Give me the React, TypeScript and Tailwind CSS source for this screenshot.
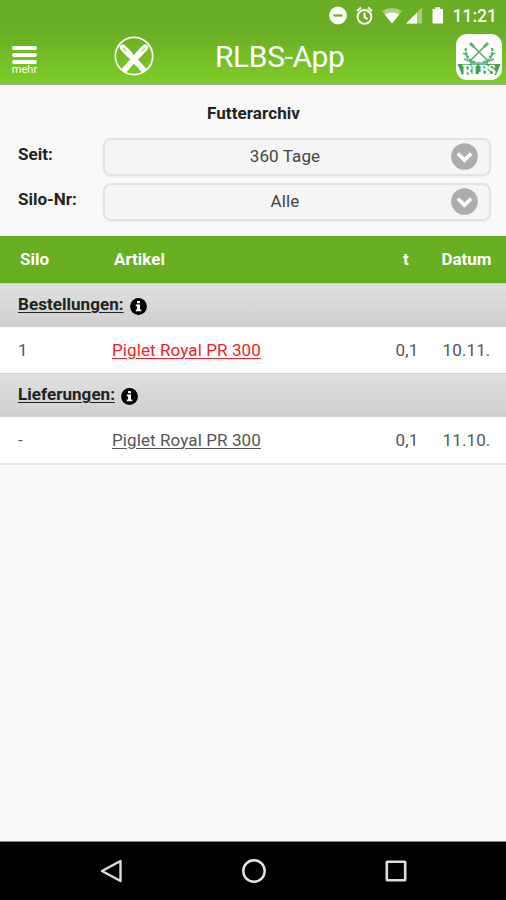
import { type ReactNode } from "react";

interface FeedEntry {
    silo: string;
    article: string;
    amount: string;
    date: string;
    open?: boolean;
}

const orders: FeedEntry[] = [
    { silo: "1", article: "Piglet Royal PR 300", amount: "0,1", date: "10.11.", open: true },
];

const deliveries: FeedEntry[] = [
    { silo: "-", article: "Piglet Royal PR 300", amount: "0,1", date: "11.10." },
];

function StatusBar() {
    return (
        <div className="flex h-8 items-center justify-end pr-[9px] text-white">
            <svg width="114" height="20" viewBox="0 0 114 20" fill="currentColor" className="mr-[10px]">
                <circle cx="9" cy="9.5" r="8.9" />
                <rect x="4.4" y="8.4" width="9.2" height="2.2" fill="#69ae24" />
                <g fill="none" stroke="currentColor" strokeWidth="2">
                    <circle cx="35.5" cy="10.8" r="6.9" />
                    <path d="M35.5 6.5V11L38.5 13.3M28 5L32 1.6M43 5L39 1.6" />
                </g>
                <path d="M53 5Q63 -1.2 73 5L63 17.5Z" opacity="0.45" />
                <path d="M55.8 8.6Q63 4.2 70.2 8.6L63 17.5Z" />
                <path d="M77 17.5L93 1.5V17.5Z" opacity="0.4" />
                <path d="M77 17.5L88 6.5V17.5Z" />
                <path d="M103.5 3H106.2V1.3H111.2V3H114V17.5H103.5Z" />
            </svg>
            <span className="mt-px text-[17.5px] font-medium leading-none">11:21</span>
        </div>
    );
}

function PaddlesIcon() {
    return (
        <svg width="40" height="40" viewBox="0 0 40 40" fill="none" stroke="white">
            <circle cx="20" cy="20" r="18.7" strokeWidth="1.7" />
            <path d="M9.5 35L28 14.5M30.5 35L12 14.5" strokeWidth="5.6" />
            <path d="M24.5 18.5L31.2 11.5M15.5 18.5L8.8 11.5" strokeWidth="6.2" strokeLinecap="round" />
            <path d="M27.5 15.5L30.8 12M12.5 15.5L9.2 12" stroke="#a8d87a" strokeWidth="1.1" />
        </svg>
    );
}

function RlbsLogo() {
    return (
        <svg width="46" height="46" viewBox="0 0 46 46">
            <rect width="46" height="46" rx="11" fill="white" />
            <g fill="none" stroke="#5fae78">
                <path d="M15 10L32 27M31 10L14 27" strokeWidth="1.7" />
                <path d="M14 9L18 13M32 9L28 13" strokeWidth="3" />
                <path d="M10 14Q8 25 20 29M36 14Q38 25 26 29" strokeWidth="2.4" strokeDasharray="3 1" />
                <path d="M7 19L13 23M8 25L16 28M39 19L33 23M38 25L30 28M14 29H32" strokeWidth="1.5" />
            </g>
            <path d="M1.5 30H44.5L40 41H6Z" fill="#45a052" />
            <text
                x="23"
                y="40.5"
                textAnchor="middle"
                textLength="33"
                lengthAdjust="spacing"
                fill="white"
                stroke="white"
                strokeWidth="0.6"
                className="font-['Liberation_Serif',serif] text-[14px] font-bold"
            >
                RLBS
            </text>
        </svg>
    );
}

function Header() {
    return (
        <header className="h-[85px] border-b border-[#9fb58e] bg-linear-to-b from-[#69ae24] from-35% to-[#7dcc27]">
            <StatusBar />
            <div className="flex h-[52px] items-start text-white">
                <button className="ml-[11px] mt-[14px] flex w-[27px] flex-col items-center">
                    <span className="flex w-[25px] flex-col gap-[3px]">
                        <span className="h-1 rounded-xs bg-white" />
                        <span className="h-1 rounded-xs bg-white" />
                        <span className="h-1 rounded-xs bg-white" />
                    </span>
                    <span className="-mt-px text-[11px] leading-[14px]">mehr</span>
                </button>
                <div className="ml-[76px] mt-[4px]">
                    <PaddlesIcon />
                </div>
                <h1 className="ml-[61px] mt-[7px] whitespace-nowrap text-[30px] leading-9 tracking-[-0.4px]">RLBS-App</h1>
                <div className="ml-auto mr-1 mt-[2px]">
                    <RlbsLogo />
                </div>
            </div>
        </header>
    );
}

function SelectField({ label, value }: { label: string; value: string }) {
    return (
        <div className="flex items-center pl-[18px] pr-[15px]">
            <span className="mb-[6px] w-[85px] font-bold text-[#222]">{label}</span>
            <div className="flex h-[38px] flex-1 items-center rounded-lg border-2 border-[#e2e2e2] bg-[#f5f5f5] pr-[11px] shadow-xs">
                <span className="mb-[3px] flex-1 pl-px text-center tracking-[0.1px] text-[#444]">{value}</span>
                <svg width="27" height="27" viewBox="0 0 27 27" className="-ml-[13px] mb-[2px]">
                    <circle cx="13.5" cy="13.5" r="13.3" fill="#acacac" />
                    <path d="M6.8 10.5L13.5 17L20.2 10.5" fill="none" stroke="white" strokeWidth="3.8" />
                </svg>
            </div>
        </div>
    );
}

function InfoIcon() {
    return (
        <svg width="17" height="17" viewBox="0 0 17 17" className="mt-[2px]">
            <circle cx="8.5" cy="8.5" r="8.4" fill="black" />
            <path d="M7 3H10V5.2H7ZM5.8 6.6H10V11.5H11.3V13.3H5.8V11.5H7.1V8.3H5.8Z" fill="white" />
        </svg>
    );
}

function TableRow({ children, className }: { children: ReactNode; className: string }) {
    return (
        <div className={`grid grid-cols-[112px_1fr_40px_79px] items-center ${className}`}>
            {children}
        </div>
    );
}

function FeedGroup({ title, entries }: { title: string; entries: FeedEntry[] }) {
    return (
        <section>
            <div className="flex h-[44px] items-center gap-[6px] border-t border-[#d0d0d0] bg-linear-to-b from-[#e0e0e0] to-[#cfcfcf] pl-[18px]">
                <h2 className="mb-[3px] font-bold tracking-[0.05px] text-[#222] underline decoration-1 underline-offset-2">
                    {title}
                </h2>
                <InfoIcon />
            </div>
            {entries.map((entry) => (
                <TableRow key={entry.date} className="h-[46px] bg-white pb-px tracking-[0.1px] text-[#555]">
                    <span className="pl-[18px]">{entry.silo}</span>
                    <a
                        className={`underline decoration-1 underline-offset-2 ${entry.open ? "text-[#f32228]" : "text-[#555]"}`}
                    >
                        {entry.article}
                    </a>
                    <span className="text-center">{entry.amount}</span>
                    <span className="text-center">{entry.date}</span>
                </TableRow>
            ))}
        </section>
    );
}

function NavigationBar() {
    return (
        <nav className="flex h-[59px] items-center justify-between border-t border-[#888] bg-black pl-[99px] pr-[98px]">
            <svg width="25" height="26" viewBox="0 0 25 26" fill="none" stroke="#dedede" strokeWidth="2.4">
                <path d="M3 13L21.5 3V23Z" strokeLinejoin="round" />
            </svg>
            <svg width="26" height="26" viewBox="0 0 26 26" fill="none" stroke="#e6e6e6" strokeWidth="2.4">
                <circle cx="13" cy="13" r="10.7" />
            </svg>
            <svg width="25" height="26" viewBox="0 0 25 26" fill="none" stroke="#dedede" strokeWidth="2.6">
                <rect x="3.8" y="3.8" width="18.4" height="18.4" rx="0.5" />
            </svg>
        </nav>
    );
}

export default function App() {
    return (
        <div className="flex h-[900px] w-[506px] flex-col overflow-hidden bg-[#f9f9f9] font-[Roboto,sans-serif] text-[17px] leading-6">
            <Header />
            <main className="flex-1">
                <h2 className="mt-4 pl-px text-center font-bold tracking-[0.1px] text-[#222]">Futterarchiv</h2>
                <div className="mt-[13px] flex flex-col gap-[7px]">
                    <SelectField label="Seit:" value="360 Tage" />
                    <SelectField label="Silo-Nr:" value="Alle" />
                </div>
                <div className="mt-[15px] border-b-2 border-[#e7e7e7]">
                    <TableRow className="h-[47px] bg-[#69af22] pb-px font-bold text-white">
                        <span className="pl-5">Silo</span>
                        <span className="pl-[2px]">Artikel</span>
                        <span className="pr-[2px] text-center">t</span>
                        <span className="text-center">Datum</span>
                    </TableRow>
                    <FeedGroup title="Bestellungen:" entries={orders} />
                    <FeedGroup title="Lieferungen:" entries={deliveries} />
                </div>
            </main>
            <NavigationBar />
        </div>
    );
}
